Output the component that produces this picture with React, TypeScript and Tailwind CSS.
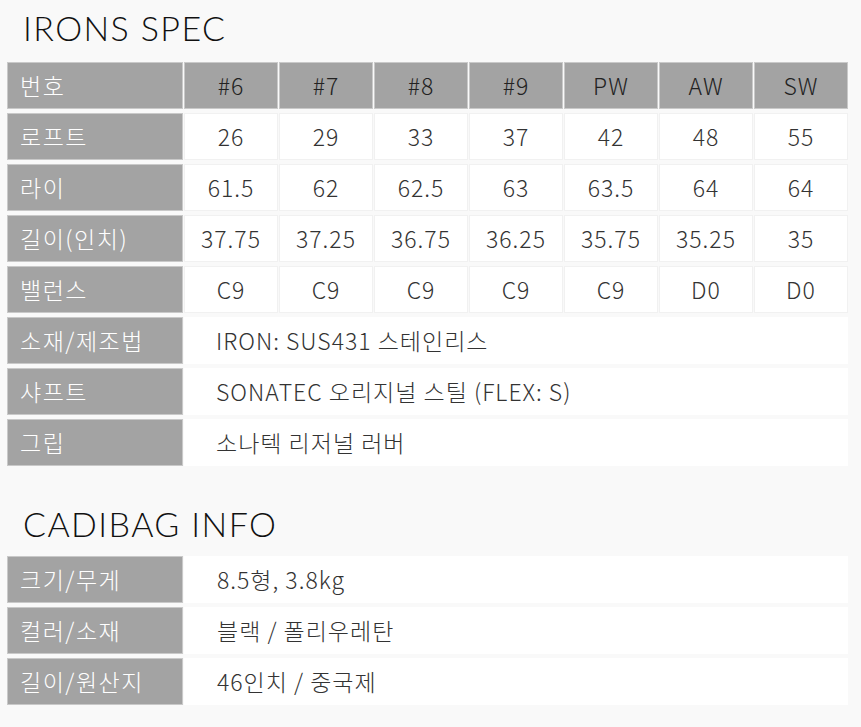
const body = '"Noto Sans CJK KR", "Noto Sans", sans-serif';

const clubs = ["#6", "#7", "#8", "#9", "PW", "AW", "SW"];

const numberRows: { label: string; values: string[] }[] = [
  { label: "로프트", values: ["26", "29", "33", "37", "42", "48", "55"] },
  { label: "라이", values: ["61.5", "62", "62.5", "63", "63.5", "64", "64"] },
  {
    label: "길이(인치)",
    values: ["37.75", "37.25", "36.75", "36.25", "35.75", "35.25", "35"],
  },
  { label: "밸런스", values: ["C9", "C9", "C9", "C9", "C9", "D0", "D0"] },
];

const textRows = [
  { label: "소재/제조법", value: "IRON: SUS431 스테인리스" },
  { label: "샤프트", value: "SONATEC 오리지널 스틸 (FLEX: S)" },
  { label: "그립", value: "소나텍 리저널 러버" },
];

const bagRows = [
  { label: "크기/무게", value: "8.5형, 3.8kg" },
  { label: "컬러/소재", value: "블랙 / 폴리우레탄" },
  { label: "길이/원산지", value: "46인치 / 중국제" },
];

function Label({ children }: { children: string }) {
  return (
    <div className="flex h-[47px] w-[176px] shrink-0 items-center border border-[#c9c9c9] bg-[#a3a3a3] pl-[12px] text-[23px] font-light tracking-[1.5px] text-white">
      {children}
    </div>
  );
}

function Heading({ children }: { children: string }) {
  return (
    <h2
      className="pl-[23px] text-[34px] leading-[40px] font-light tracking-[1.4px] text-[#111]"
      style={{ fontFamily: '"Lato", "Noto Sans", sans-serif' }}
    >
      {children}
    </h2>
  );
}

export default function App() {
  return (
    <div
      className="h-[727px] w-[861px] bg-[#f9f9f9] pt-[8px]"
      style={{ fontFamily: body }}
    >
      <Heading>IRONS SPEC</Heading>

      <div className="mt-[14px] flex w-[848px] flex-col gap-[4px] pl-[7px]">
        <div className="flex gap-[1px]">
          <Label>번호</Label>
          {clubs.map((c) => (
            <div
              key={c}
              className="flex h-[47px] flex-1 items-center justify-center border border-[#c9c9c9] bg-[#a3a3a3] text-[23px] font-light tracking-[1px] text-[#222]"
            >
              {c}
            </div>
          ))}
        </div>

        {numberRows.map((row) => (
          <div key={row.label} className="flex gap-[1px]">
            <Label>{row.label}</Label>
            {row.values.map((v, i) => (
              <div
                key={i}
                className="flex h-[47px] flex-1 items-center justify-center border border-[#f1f1f1] bg-white text-[23px] font-light tracking-[1px] text-[#333]"
              >
                {v}
              </div>
            ))}
          </div>
        ))}

        {textRows.map((row) => (
          <div key={row.label} className="flex gap-[1px]">
            <Label>{row.label}</Label>
            <div className="flex h-[47px] flex-1 items-center bg-white pl-[32px] text-[23px] font-light tracking-[1px] text-[#333]">
              {row.value}
            </div>
          </div>
        ))}
      </div>

      <div className="mt-[38px]">
        <Heading>CADIBAG INFO</Heading>
      </div>

      <div className="mt-[12px] flex w-[848px] flex-col gap-[4px] pl-[7px]">
        {bagRows.map((row) => (
          <div key={row.label} className="flex gap-[1px]">
            <Label>{row.label}</Label>
            <div className="flex h-[47px] flex-1 items-center bg-white pl-[33px] text-[23px] font-light tracking-[1px] text-[#333]">
              {row.value}
            </div>
          </div>
        ))}
      </div>
    </div>
  );
}
